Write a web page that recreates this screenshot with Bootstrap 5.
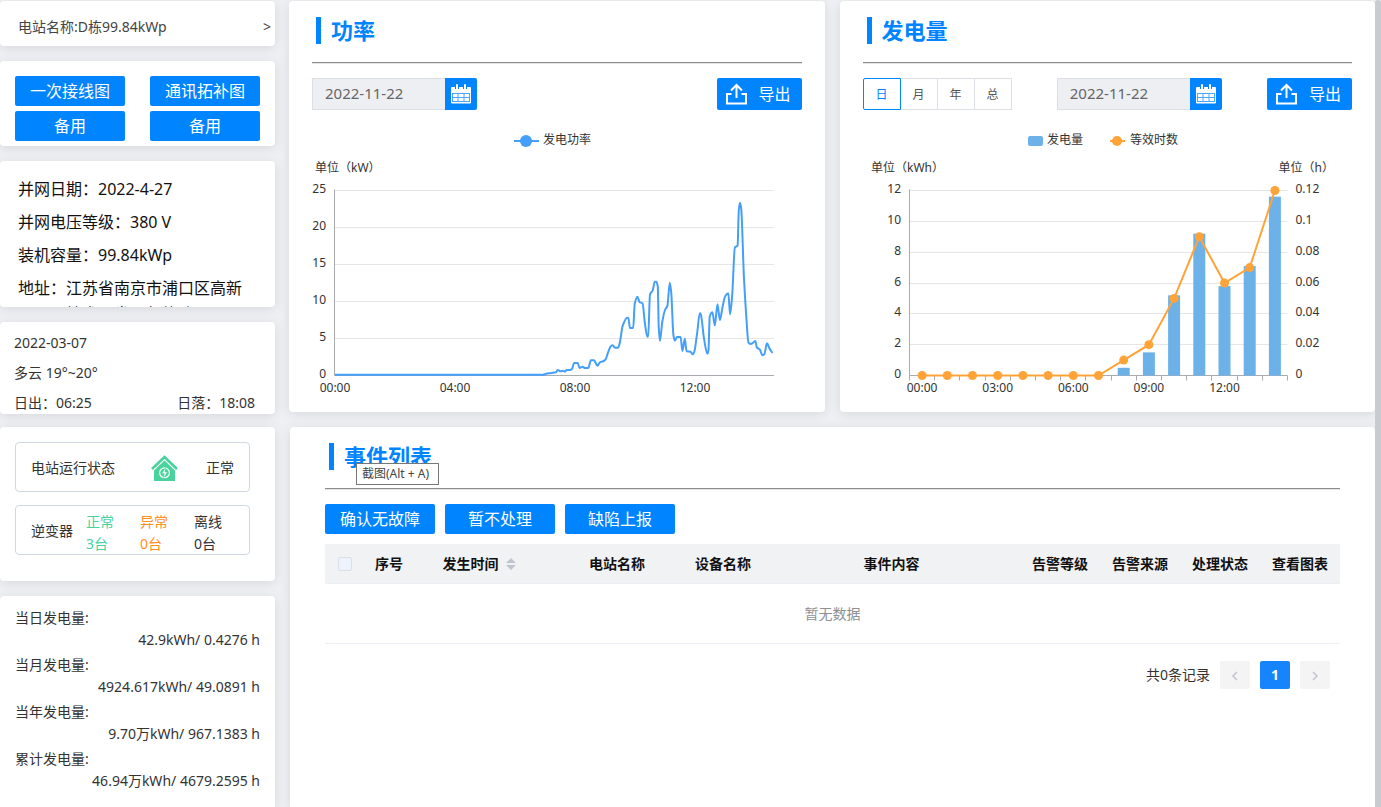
<!DOCTYPE html>
<html lang="zh-CN">
<head>
<meta charset="utf-8">
<meta name="viewport" content="width=device-width, initial-scale=1">
<title>电站监控</title>
<link href="https://cdn.jsdelivr.net/npm/bootstrap@5.3.0/dist/css/bootstrap.min.css" rel="stylesheet">
<style>
:root { --brand: #0084ff; }
body { background: #eff0f4; color: #333; font-family: "Noto Sans", "Noto Sans CJK SC", sans-serif; font-size: 14px; line-height: 22px; }
.shell { min-height: 100vh; }
.side { width: 275px; flex: none; }
.thumb { width: 6px; flex: none; background: #c8cbd0; border-radius: 3px 3px 0 0; }
.panel { background: #fff; border-radius: 4px; box-shadow: 0 2px 12px rgba(0,0,0,.1); margin-bottom: 15px; }
.panel-end { border-radius: 4px 4px 0 0; margin-bottom: 0; }
.btn-main { background: var(--brand); color: #fff; border: 0; border-radius: 2px; width: 110px; height: 30px; font-size: 16px; line-height: 30px; padding: 0; }
.btn-main:hover { background: #2b98ff; color: #fff; }
.station { height: 45px; padding: 6px 4px 0 18px; margin-top: 1px; color: #444; text-decoration: none; }
.shortcuts { display: grid; grid-template-columns: 110px 110px; justify-content: space-between; gap: 5px; padding: 15px 15px 5px; }
.info { height: 146px; padding: 12px 18px 0; font-size: 16px; line-height: 33px; color: #111; overflow: hidden; }
.address { line-height: 26px; margin-top: 3px; }
.weather { height: 92px; padding: 6px 20px 0 14px; line-height: 30px; overflow: hidden; margin-bottom: 13px; }
.status { height: 154px; padding: 15px 25px 0 15px; }
.state-box { height: 50px; border: 1px solid #cfd8e2; border-radius: 4px; padding: 2px 15px 0; margin-bottom: 13px; }
.ok { color: #48d39c; } .bad { color: #ff8f1f; }
.counts { display: grid; grid-template-columns: 54px 54px 28px; margin-right: 12px; padding-top: 4px; }
.totals { padding: 11px 15px 0; }
.totals dt { font-weight: 400; } .totals dd { margin: 0 0 3px; text-align: right; }
.board { min-width: 0; padding: 1px 0 0 14px; }
.chart-panel { flex: 1 1 0; min-width: 0; height: 411px; padding: 16px 23px 0; }
.events { padding: 16px 35px 0; margin-left: 1px; }
.caption { color: var(--brand); font-size: 22px; line-height: 27px; font-weight: 600; border-left: 5px solid var(--brand); padding-left: 10px; margin: 0 0 0 4px; }
.rule { height: 2px; border: 0; background: linear-gradient(#8c8c8c 50%, #e4e4e4 50%); opacity: 1; margin: 18px 0 14px; }
.date-box { width: 133px; height: 32px; background: #eeeff3; border: 1px solid #dcdfe6; border-right: 0; color: #666; font-size: 15px; padding: 0 12px 2px; border-radius: 0; }
.date-btn { width: 32px; height: 32px; border: 0; background: var(--brand); border-radius: 0 2px 2px 0; padding: 6px 5px; }
.export { width: 85px; height: 32px; border: 0; border-radius: 2px; background: var(--brand); color: #fff; font-size: 16px; padding: 0 11px 0 8px; }
.span-pick .btn { width: 38px; height: 32px; padding: 0; font-size: 12px; line-height: 32px; border: 1px solid #dcdfe6; color: #555; background: #fff; border-radius: 0; margin-left: -1px; }
.span-pick .btn:first-of-type { margin-left: 0; border-radius: 2px 0 0 2px; }
.span-pick .btn-check:checked + .btn { border-color: var(--brand); color: var(--brand); background: #fff; z-index: 1; }
.plot { display: block; width: 100%; height: 280px; margin-top: 14px; font-size: 12px; }
.plot text { fill: #333; }
.tip { position: absolute; left: 27px; top: 20px; background: #fff; border: 1px solid #767676; font-size: 12px; line-height: 20px; padding: 0 9px 0 5px; color: #444; white-space: nowrap; }
.grid-table { table-layout: fixed; width: 100%; margin-top: 10px; text-align: center; border-collapse: separate; border-spacing: 0; }
.grid-table th { height: 40px; padding: 0; background: #f1f2f4; color: #111; border-bottom: 1px solid #ebeef5; font-weight: 700; white-space: nowrap; }
.grid-table td { height: 60px; border-bottom: 1px solid #ebeef5; color: #8d9095; }
.tick { appearance: none; display: block; width: 14px; height: 14px; margin: auto; border: 1px solid #dcdfe6; border-radius: 2px; background: #edf2fc; }
.sort { width: 10px; height: 14px; margin: -2px 6px 0 7px; }
.pager { padding: 17px 10px 0 0; gap: 10px; }
.pager button { width: 30px; height: 28px; border: 0; border-radius: 2px; background: #f4f4f5; color: #c0c4cc; padding: 0; font-weight: 700; }
.pager .on { background: #1684fc; color: #fff; }
</style>
</head>
<body>
<div class="shell d-flex">
  <aside class="side d-flex flex-column">
    <a href="#" class="panel station d-flex align-items-center justify-content-between"><span>电站名称:D栋99.84kWp</span><span>&gt;</span></a>
    <div class="panel shortcuts">
      <button class="btn btn-main">一次接线图</button><button class="btn btn-main">通讯拓补图</button>
      <button class="btn btn-main">备用</button><button class="btn btn-main">备用</button>
    </div>
    <div class="panel info">
      <div>并网日期：2022-4-27</div>
      <div>并网电压等级：380 V</div>
      <div>装机容量：99.84kWp</div>
      <div class="address d-flex"><span class="flex-shrink-0">地址：</span><span>江苏省南京市浦口区高新技术开发区部能路</span></div>
    </div>
    <div class="panel weather">
      <div>2022-03-07</div>
      <div>多云 19°~20°</div>
      <div class="d-flex justify-content-between"><span>日出：06:25</span><span>日落：18:08</span></div>
    </div>
    <div class="panel status">
      <div class="state-box d-flex align-items-center justify-content-between">
        <span>电站运行状态</span>
        <svg width="27" height="26" viewBox="0 0 27 26" aria-hidden="true" class="ms-2">
          <path d="M1 14 13.500 2 26 14" fill="none" stroke="#48d39c" stroke-width="2.600"/>
          <path d="M13.500 5.500 24 15.500V26H3V15.500Z" fill="#48d39c"/>
          <circle cx="13.500" cy="17.800" r="4.900" fill="none" stroke="#fff" stroke-width="1.200"/>
          <path d="M14.800 12.500 10.800 18.500H13.200L12.200 23.500 16.400 17H13.900Z" fill="#fff" stroke="#48d39c" stroke-width=".5"/>
        </svg>
        <span>正常</span>
      </div>
      <div class="state-box d-flex align-items-center">
        <span class="me-auto">逆变器</span>
        <div class="counts">
          <span class="ok">正常<br>3台</span><span class="bad">异常<br>0台</span><span>离线<br>0台</span>
        </div>
      </div>
    </div>
    <dl class="panel panel-end totals flex-grow-1">
      <dt>当日发电量:</dt><dd>42.9kWh/ 0.4276 h</dd>
      <dt>当月发电量:</dt><dd>4924.617kWh/ 49.0891 h</dd>
      <dt>当年发电量:</dt><dd>9.70万kWh/ 967.1383 h</dd>
      <dt>累计发电量:</dt><dd>46.94万kWh/ 4679.2595 h</dd>
    </dl>
  </aside>

  <main class="board flex-grow-1 d-flex flex-column">
    <div class="d-flex" style="gap:15px">
      <section class="panel chart-panel">
        <h2 class="caption">功率</h2>
        <hr class="rule">
        <div class="d-flex justify-content-between">
          <div class="d-flex">
            <input class="date-box" type="text" value="2022-11-22" aria-label="功率日期" readonly>
            <button class="date-btn" aria-label="选择日期"><svg class="d-block" width="22" height="20" viewBox="0 0 22 20"><use href="#cal"/></svg></button>
          </div>
          <button class="export d-flex align-items-center justify-content-between"><svg width="23" height="22" viewBox="0 0 23 22"><use href="#out"/></svg>导出</button>
        </div>
        <svg class="plot" id="power" role="img" aria-label="发电功率曲线"></svg>
      </section>
      <section class="panel chart-panel">
        <h2 class="caption">发电量</h2>
        <hr class="rule">
        <div class="d-flex justify-content-between">
          <div class="span-pick d-flex" role="group" aria-label="统计周期">
            <input class="btn-check" type="radio" name="span" id="s1" checked><label class="btn" for="s1">日</label>
            <input class="btn-check" type="radio" name="span" id="s2"><label class="btn" for="s2">月</label>
            <input class="btn-check" type="radio" name="span" id="s3"><label class="btn" for="s3">年</label>
            <input class="btn-check" type="radio" name="span" id="s4"><label class="btn" for="s4">总</label>
          </div>
          <div class="d-flex">
            <input class="date-box" type="text" value="2022-11-22" aria-label="发电量日期" readonly>
            <button class="date-btn" aria-label="选择日期"><svg class="d-block" width="22" height="20" viewBox="0 0 22 20"><use href="#cal"/></svg></button>
          </div>
          <button class="export d-flex align-items-center justify-content-between"><svg width="23" height="22" viewBox="0 0 23 22"><use href="#out"/></svg>导出</button>
        </div>
        <svg class="plot" id="energy" role="img" aria-label="发电量与等效时数"></svg>
      </section>
    </div>

    <section class="panel panel-end events flex-grow-1">
      <div class="position-relative ms-1">
        <h2 class="caption ms-0">事件列表</h2>
        <div class="tip" role="tooltip">截图(Alt + A)</div>
      </div>
      <hr class="rule">
      <div class="d-flex pt-px" style="gap:10px">
        <button class="btn btn-main">确认无故障</button>
        <button class="btn btn-main">暂不处理</button>
        <button class="btn btn-main">缺陷上报</button>
      </div>
      <table class="grid-table">
        <colgroup><col style="width:40px"><col style="width:48px"><col style="width:138px"><col style="width:132px"><col style="width:80px"><col><col style="width:80px"><col style="width:80px"><col style="width:80px"><col style="width:80px"></colgroup>
        <thead><tr>
          <th><input class="tick" type="checkbox" aria-label="全选"></th>
          <th>序号</th>
          <th>发生时间<svg class="sort" viewBox="0 0 10 14" aria-hidden="true"><path d="M5 1 10 6H0ZM0 8H10L5 13Z" fill="#c0c4cc"/></svg></th>
          <th>电站名称</th><th>设备名称</th><th>事件内容</th><th>告警等级</th><th>告警来源</th><th>处理状态</th><th>查看图表</th>
        </tr></thead>
        <tbody><tr><td colspan="10">暂无数据</td></tr></tbody>
      </table>
      <nav class="pager d-flex justify-content-end align-items-center" aria-label="分页">
        <span>共0条记录</span>
        <button aria-label="上一页"><svg width="8" height="10" viewBox="0 0 8 10"><path d="M6 1 2 5 6 9" fill="none" stroke="#c0c4cc" stroke-width="1.500"/></svg></button>
        <button class="on">1</button>
        <button aria-label="下一页"><svg width="8" height="10" viewBox="0 0 8 10"><path d="M2 1 6 5 2 9" fill="none" stroke="#c0c4cc" stroke-width="1.500"/></svg></button>
      </nav>
    </section>
  </main>
  <div class="thumb"></div>
</div>

<svg width="0" height="0" class="position-absolute" aria-hidden="true">
  <symbol id="cal" viewBox="0 0 22 20">
    <path d="M1 4a1 1 0 0 1 1-1H20a1 1 0 0 1 1 1V18.500a1 1 0 0 1-1 1H2a1 1 0 0 1-1-1Z" fill="#fff"/>
    <path d="M7 1V5M15 1V5" stroke="#0084ff" stroke-width="4"/>
    <path d="M7 1V5M15 1V5" stroke="#fff" stroke-width="2" stroke-linecap="round"/>
    <path d="M2.500 9.500H19.500M2.500 13.500H19.500M2.500 17.500H19.500M2.500 9V18M8 9V18M14 9V18M19.500 9V18" stroke="#4aa6ff" fill="none"/>
  </symbol>
  <symbol id="out" viewBox="0 0 23 22">
    <path d="M6.500 11H2V20.500H21V11H16.500" fill="none" stroke="#fff" stroke-width="2"/>
    <path d="M11.500 15V2M6 7.500 11.500 2 17 7.500" fill="none" stroke="#fff" stroke-width="2"/>
  </symbol>
</svg>

<script src="https://cdn.jsdelivr.net/npm/bootstrap@5.3.0/dist/js/bootstrap.bundle.min.js"></script>
<script>
// [hour, kW]
const power = [[0,.1],[3,.1],[6.85,.1],[6.9,.07],[7.01,.2],[7.13,.3],[7.37,.43],[7.42,.74],[7.52,.56],[7.6,.65],[7.67,.52],[7.72,.74],[7.83,.74],[7.9,.88],[7.97,1.69],[8.09,1.69],[8.15,1.01],[8.25,1.19],[8.33,1.01],[8.44,1.01],[8.53,2.05],[8.63,2.05],[8.75,1.33],[8.83,1.78],[8.96,1.96],[9.03,2.27],[9.1,3.09],[9.2,3.99],[9.26,4.08],[9.33,3.76],[9.44,3.76],[9.5,4.57],[9.59,6.73],[9.74,7.82],[9.78,7.77],[9.83,6.42],[9.94,6.42],[9.99,9.66],[10.08,10.65],[10.15,9.93],[10.25,9.75],[10.33,7.05],[10.41,5.25],[10.44,5.25],[10.5,10.97],[10.59,11.51],[10.66,12.68],[10.71,12.68],[10.76,12],[10.79,6.6],[10.83,4.66],[10.91,7.27],[11,8.85],[11.08,9.44],[11.16,12.55],[11.21,11.1],[11.28,5.47],[11.33,4.71],[11.4,5.2],[11.52,5.2],[11.58,3.31],[11.66,4.98],[11.72,3.27],[11.85,3.22],[11.92,2.86],[11.97,3.13],[12.07,5.7],[12.16,8.4],[12.19,8.31],[12.3,5.02],[12.41,2.95],[12.45,3.45],[12.49,7.95],[12.58,8.54],[12.66,6.78],[12.75,9.62],[12.83,7.5],[12.92,9.3],[13.01,10.74],[13.11,11.1],[13.17,8.27],[13.24,10.88],[13.33,17.32],[13.42,17.55],[13.46,22.36],[13.5,23.36],[13.54,22.59],[13.63,13.36],[13.71,7.95],[13.78,4.48],[13.85,4.26],[13.94,4.44],[14.01,4.66],[14.06,3.81],[14.17,3.45],[14.24,2.73],[14.31,2.86],[14.4,4.35],[14.48,3.67],[14.58,3.04]];
const energy = [0,0,0,0,0,0,0,0,.5,1.5,5.2,9.2,5.8,7.1,11.6];
const hours = [0,0,0,0,0,0,0,0,.01,.02,.05,.09,.06,.07,.12];
const TOP = 66.5, BASE = 251.5;
const crisp = v => Math.floor(v) + .5;
const text = (x, y, s, a = 'start') => `<text x="${x}" y="${y}" text-anchor="${a}">${s}</text>`;
const line = (x1, y1, x2, y2, c) => `<path d="M${x1} ${y1}L${x2} ${y2}" stroke="${c}"/>`;

// monotone cubic through the points
function smooth(p) {
  const n = p.length, s = [], m = [];
  for (let i = 0; i < n - 1; i++) s[i] = (p[i+1][1] - p[i][1]) / (p[i+1][0] - p[i][0]);
  for (let i = 0; i < n; i++) {
    const a = s[i-1] ?? s[i], b = s[i] ?? a;
    m[i] = a * b <= 0 ? 0 : 2 * a * b / (a + b);
  }
  let d = `M${p[0]}`;
  for (let i = 0; i < n - 1; i++) {
    const h = (p[i+1][0] - p[i][0]) / 3;
    d += `C${p[i][0] + h},${p[i][1] + m[i] * h} ${p[i+1][0] - h},${p[i+1][1] - m[i+1] * h} ${p[i+1]}`;
  }
  return d;
}
function frame(left, right, steps, labels, edge) {
  let out = '';
  labels.forEach((v, i) => {
    const y = crisp(BASE - (BASE - TOP) * i / steps);
    if (i) out += line(left, y, right, y, '#e6e6e8');
    out += text(edge, y + 2, v, 'end');
  });
  return out + line(left, TOP - 1, left, BASE, '#a8abb0') + line(left, BASE, right, BASE, '#a8abb0');
}
function draw() {
  let el = document.getElementById('power'), w = el.clientWidth, l = 22.5, r = w - 28, c = Math.round(w / 2) - 4;
  let x = h => l + .5 + (r - l) * h / 14.65, y = v => BASE - (BASE - TOP) * v / 25;
  let out = frame(l, r, 5, [0,5,10,15,20,25], 14) + text(3, 48, '单位（kW）');
  [0,4,8,12].forEach(h => out += text(x(h), 268, String(h).padStart(2, '0') + ':00', 'middle'));
  out += `<path d="${smooth(power.map(p => [x(p[0]), y(p[1])]))}" fill="none" stroke="#449ffa" stroke-width="2" stroke-linejoin="round"/>`;
  out += `<path d="M${c-39} 17h25" stroke="#449ffa" stroke-width="2"/><circle cx="${c-27}" cy="17" r="6" fill="#449ffa"/>` + text(c - 10, 20, '发电功率');
  el.innerHTML = out;

  el = document.getElementById('energy'); w = el.clientWidth; l = 46.5; r = w - 65.5; c = Math.round(w / 2) - 4;
  const step = (r - l) / 15, mid = i => l + step * (i + .5);
  out = frame(l, r, 6, [0,2,4,6,8,10,12], 38) + text(8, 48, '单位（kWh）') + text(r - 9, 48, '单位（h）');
  [0,.02,.04,.06,.08,.1,.12].forEach((v, i) => out += text(r + 8, crisp(BASE - (BASE - TOP) * i / 6) + 2, v));
  for (let i = 0; i <= 15; i++) out += line(crisp(l + step * i), BASE, crisp(l + step * i), BASE + 5, '#a8abb0');
  energy.forEach((v, i) => { if (v) { const h = (BASE - TOP) * v / 12; out += `<rect x="${mid(i)-6}" y="${BASE-h}" width="12" height="${h}" fill="#6cb2e9"/>`; } });
  [0,3,6,9,12].forEach(i => out += text(mid(i), 268, String(i).padStart(2, '0') + ':00', 'middle'));
  const pts = hours.map((v, i) => [mid(i), BASE - (BASE - TOP) * v / .12]);
  out += `<polyline points="${pts.join(' ')}" fill="none" stroke="#ffa338" stroke-width="2"/>`;
  pts.forEach(p => out += `<circle cx="${p[0]}" cy="${p[1]}" r="4.5" fill="#ffa338"/>`);
  out += `<rect x="${c-76}" y="12" width="15" height="10" rx="2" fill="#6cb2e9"/>` + text(c - 57, 20, '发电量');
  out += `<path d="M${c+6} 17h15" stroke="#ffa338" stroke-width="2"/><circle cx="${c+13}" cy="17" r="5" fill="#ffa338"/>` + text(c + 26, 20, '等效时数');
  el.innerHTML = out;
}
draw();
addEventListener('resize', draw);
</script>
</body>
</html>
